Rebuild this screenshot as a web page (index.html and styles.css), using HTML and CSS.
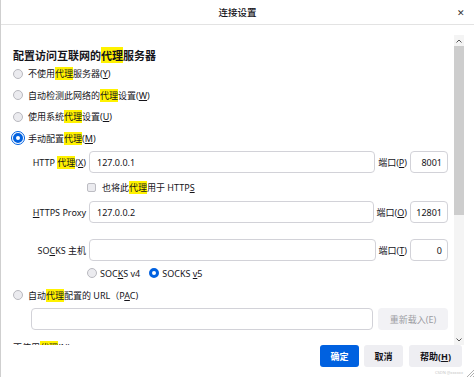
FILE: index.html
```html
<!DOCTYPE html>
<html>
<head>
    <meta charset="utf-8">
    <link rel="stylesheet" href="styles.css">
</head>
<body>
    <div class="dialog">
        <div class="titlebar">
            <span></span>
            <span class="title">连接设置</span>
            <span class="close">&#x2715;</span>
        </div>
        <div class="main">
            <div class="content">
                <h1>配置访问互联网的<mark>代理</mark>服务器</h1>
                <div class="option"><span class="radio"></span><span>不使用<mark>代理</mark>服务器(<u>Y</u>)</span></div>
                <div class="option"><span class="radio"></span><span>自动检测此网络的<mark>代理</mark>设置(<u>W</u>)</span></div>
                <div class="option"><span class="radio"></span><span>使用系统<mark>代理</mark>设置(<u>U</u>)</span></div>
                <div class="option"><span class="radio checked focused"></span><span>手动配置<mark>代理</mark>(<u>M</u>)</span></div>

                <div class="field first">
                    <span class="flabel">HTTP <mark>代理</mark>(<u>X</u>)</span>
                    <div class="input">127.0.0.1</div>
                    <span class="plabel">端口(<u>P</u>)</span>
                    <div class="input port">8001</div>
                </div>
                <div class="check-row"><span class="checkbox"></span><span>也将此<mark>代理</mark>用于 HTTP<u>S</u></span></div>
                <div class="field">
                    <span class="flabel"><u>H</u>TTPS Proxy</span>
                    <div class="input">127.0.0.2</div>
                    <span class="plabel">端口(<u>O</u>)</span>
                    <div class="input port">12801</div>
                </div>
                <div class="field socks">
                    <span class="flabel">SO<u>C</u>KS 主机</span>
                    <div class="input"></div>
                    <span class="plabel">端口(<u>T</u>)</span>
                    <div class="input port">0</div>
                </div>
                <div class="socks-row">
                    <span class="opt"><span class="radio"></span><span>SOC<u>K</u>S v4</span></span>
                    <span class="opt"><span class="radio checked"></span><span>SOCKS <u>v</u>5</span></span>
                </div>
                <div class="option pac"><span class="radio"></span><span>自动<mark>代理</mark>配置的 URL（P<u>A</u>C)</span></div>
                <div class="pac-row">
                    <div class="input"></div>
                    <div class="reload">重新载入(E)</div>
                </div>
                <div class="option cut"><span>不使用<mark>代理</mark>(<u>N</u>)</span></div>
            </div>
            <div class="scrollbar">
                <div class="arrow">
                    <svg width="6" height="4" viewBox="0 0 6 4"><path d="M0.5 3.5 L3 1 L5.5 3.5" fill="none" stroke="#555" stroke-width="1"/></svg>
                </div>
                <div class="thumb"></div>
                <div class="track"></div>
                <div class="arrow">
                    <svg width="6" height="4" viewBox="0 0 6 4"><path d="M0.5 0.5 L3 3 L5.5 0.5" fill="none" stroke="#555" stroke-width="1"/></svg>
                </div>
            </div>
        </div>
        <div class="footer">
            <div class="buttons">
                <button class="btn primary">确定</button>
                <button class="btn">取消</button>
                <button class="btn help">帮助(<u>H</u>)</button>
            </div>
            <div class="status">
                <span class="mark-text">CSDN @xxxxxx</span>
                <svg width="8" height="8" viewBox="0 0 8 8"><path d="M8 1 L1 8 M8 4 L4 8 M8 7 L7 8" stroke="#9a9a9a" stroke-width="0.8"/></svg>
            </div>
        </div>
    </div>
</body>
</html>
```

FILE: styles.css
```css
*{
    box-sizing: border-box;
    margin: 0;
    padding: 0;
}
body{
    width: 474px;
    height: 377px;
    overflow: hidden;
    background: #fff;
    font-family: "Noto Sans", "Noto Sans CJK SC", sans-serif;
    font-size: 9px;
    color: #15141a;
}
mark{
    background: #fff200;
    color: inherit;
}
u{
    text-decoration: underline;
    text-underline-offset: 1px;
}
.dialog{
    height: 377px;
    border-left: 1px solid #cfcfcf;
    display: flex;
    flex-direction: column;
}
.titlebar{
    height: 25px;
    border-bottom: 1px solid #e3e3e3;
    display: grid;
    grid-template-columns: 1fr auto 1fr;
    align-items: center;
}
.title{
    font-size: 9.5px;
    font-weight: 500;
    font-family: "Noto Sans CJK SC", sans-serif;
}
.close{
    justify-self: end;
    margin-right: 9px;
    font-size: 9px;
    color: #333;
}
.main{
    display: flex;
    height: 320px;
}
.content{
    flex: 1;
    overflow: hidden;
    padding: 22px 6px 0 12px;
}
h1{
    font-size: 11px;
    font-weight: bold;
    line-height: 16px;
    font-family: "Noto Sans CJK SC", sans-serif;
}
.option{
    display: flex;
    align-items: center;
    height: 21.5px;
}
.radio{
    display: inline-block;
    width: 10px;
    height: 10px;
    border: 1px solid #b9b9bf;
    border-radius: 50%;
    background: #ebebef;
    margin-right: 5px;
    flex: none;
}
.radio.checked{
    border: 3px solid #0061e0;
    background: #fff;
}
.radio.focused{
    outline: 1.5px solid #0061e0;
    outline-offset: 1px;
}
.field{
    display: flex;
    align-items: center;
    height: 22px;
    margin-top: 4px;
}
.field.first{
    margin-top: 2px;
}
.field.socks{
    margin-top: 16px;
}
.flabel{
    width: 73px;
    text-align: right;
    flex: none;
}
.input{
    flex: 1;
    height: 22px;
    margin-left: 3px;
    border: 1px solid #d2d2d8;
    border-radius: 4px;
    display: flex;
    align-items: center;
    padding: 0 7px;
}
.input.port{
    flex: none;
    width: 38px;
    margin-left: 0;
    justify-content: flex-end;
    padding: 0 5px;
}
.plabel{
    margin: 0 3px;
    flex: none;
}
.check-row{
    display: flex;
    align-items: center;
    height: 20px;
    margin-top: 4px;
    padding-left: 74px;
}
.checkbox{
    width: 9px;
    height: 9px;
    border: 1px solid #bdbdc3;
    border-radius: 2px;
    background: #ebebef;
    margin-right: 6px;
}
.socks-row{
    display: flex;
    align-items: center;
    height: 20px;
    margin-top: 2px;
    padding-left: 74px;
    gap: 9px;
}
.opt{
    display: flex;
    align-items: center;
}
.opt .radio{
    margin-right: 3px;
}
.option.pac{
    height: 20px;
    margin-top: 2px;
}
.pac-row{
    display: flex;
    align-items: center;
    margin-top: 3px;
    padding-left: 18px;
    height: 22px;
}
.pac-row .input{
    margin-left: 0;
}
.reload{
    width: 70px;
    height: 22px;
    margin-left: 5px;
    border-radius: 4px;
    background: #f2f2f5;
    color: #9c9ca2;
    display: flex;
    align-items: center;
    justify-content: center;
}
.option.cut{
    margin-top: 8px;
    height: 18px;
}
.scrollbar{
    width: 10px;
    margin-right: 10px;
    padding-top: 10px;
    display: flex;
    flex-direction: column;
}
.arrow{
    height: 11px;
    background: #f4f4f4;
    display: flex;
    align-items: center;
    justify-content: center;
}
.thumb{
    height: 169px;
    background: #cdcdcd;
}
.track{
    flex: 1;
    background: #f4f4f4;
}
.footer{
    flex: 1;
    display: flex;
    flex-direction: column;
}
.buttons{
    display: flex;
    justify-content: flex-end;
    gap: 5px;
    padding-right: 12px;
}
.btn{
    height: 22px;
    width: 39px;
    border: none;
    border-radius: 3px;
    background: #eeeef2;
    color: #15141a;
    font-family: "Noto Sans", "Noto Sans CJK SC", sans-serif;
    font-size: 9px;
    font-weight: bold;
}
.btn.primary{
    background: #0061e0;
    color: #fff;
}
.btn.help{
    width: 53px;
    margin-left: 1px;
}
.status{
    flex: 1;
    display: flex;
    justify-content: flex-end;
    align-items: flex-end;
}
.mark-text{
    font-size: 4px;
    color: #c4c4c4;
    margin-right: 3px;
    margin-bottom: 2px;
}
```
